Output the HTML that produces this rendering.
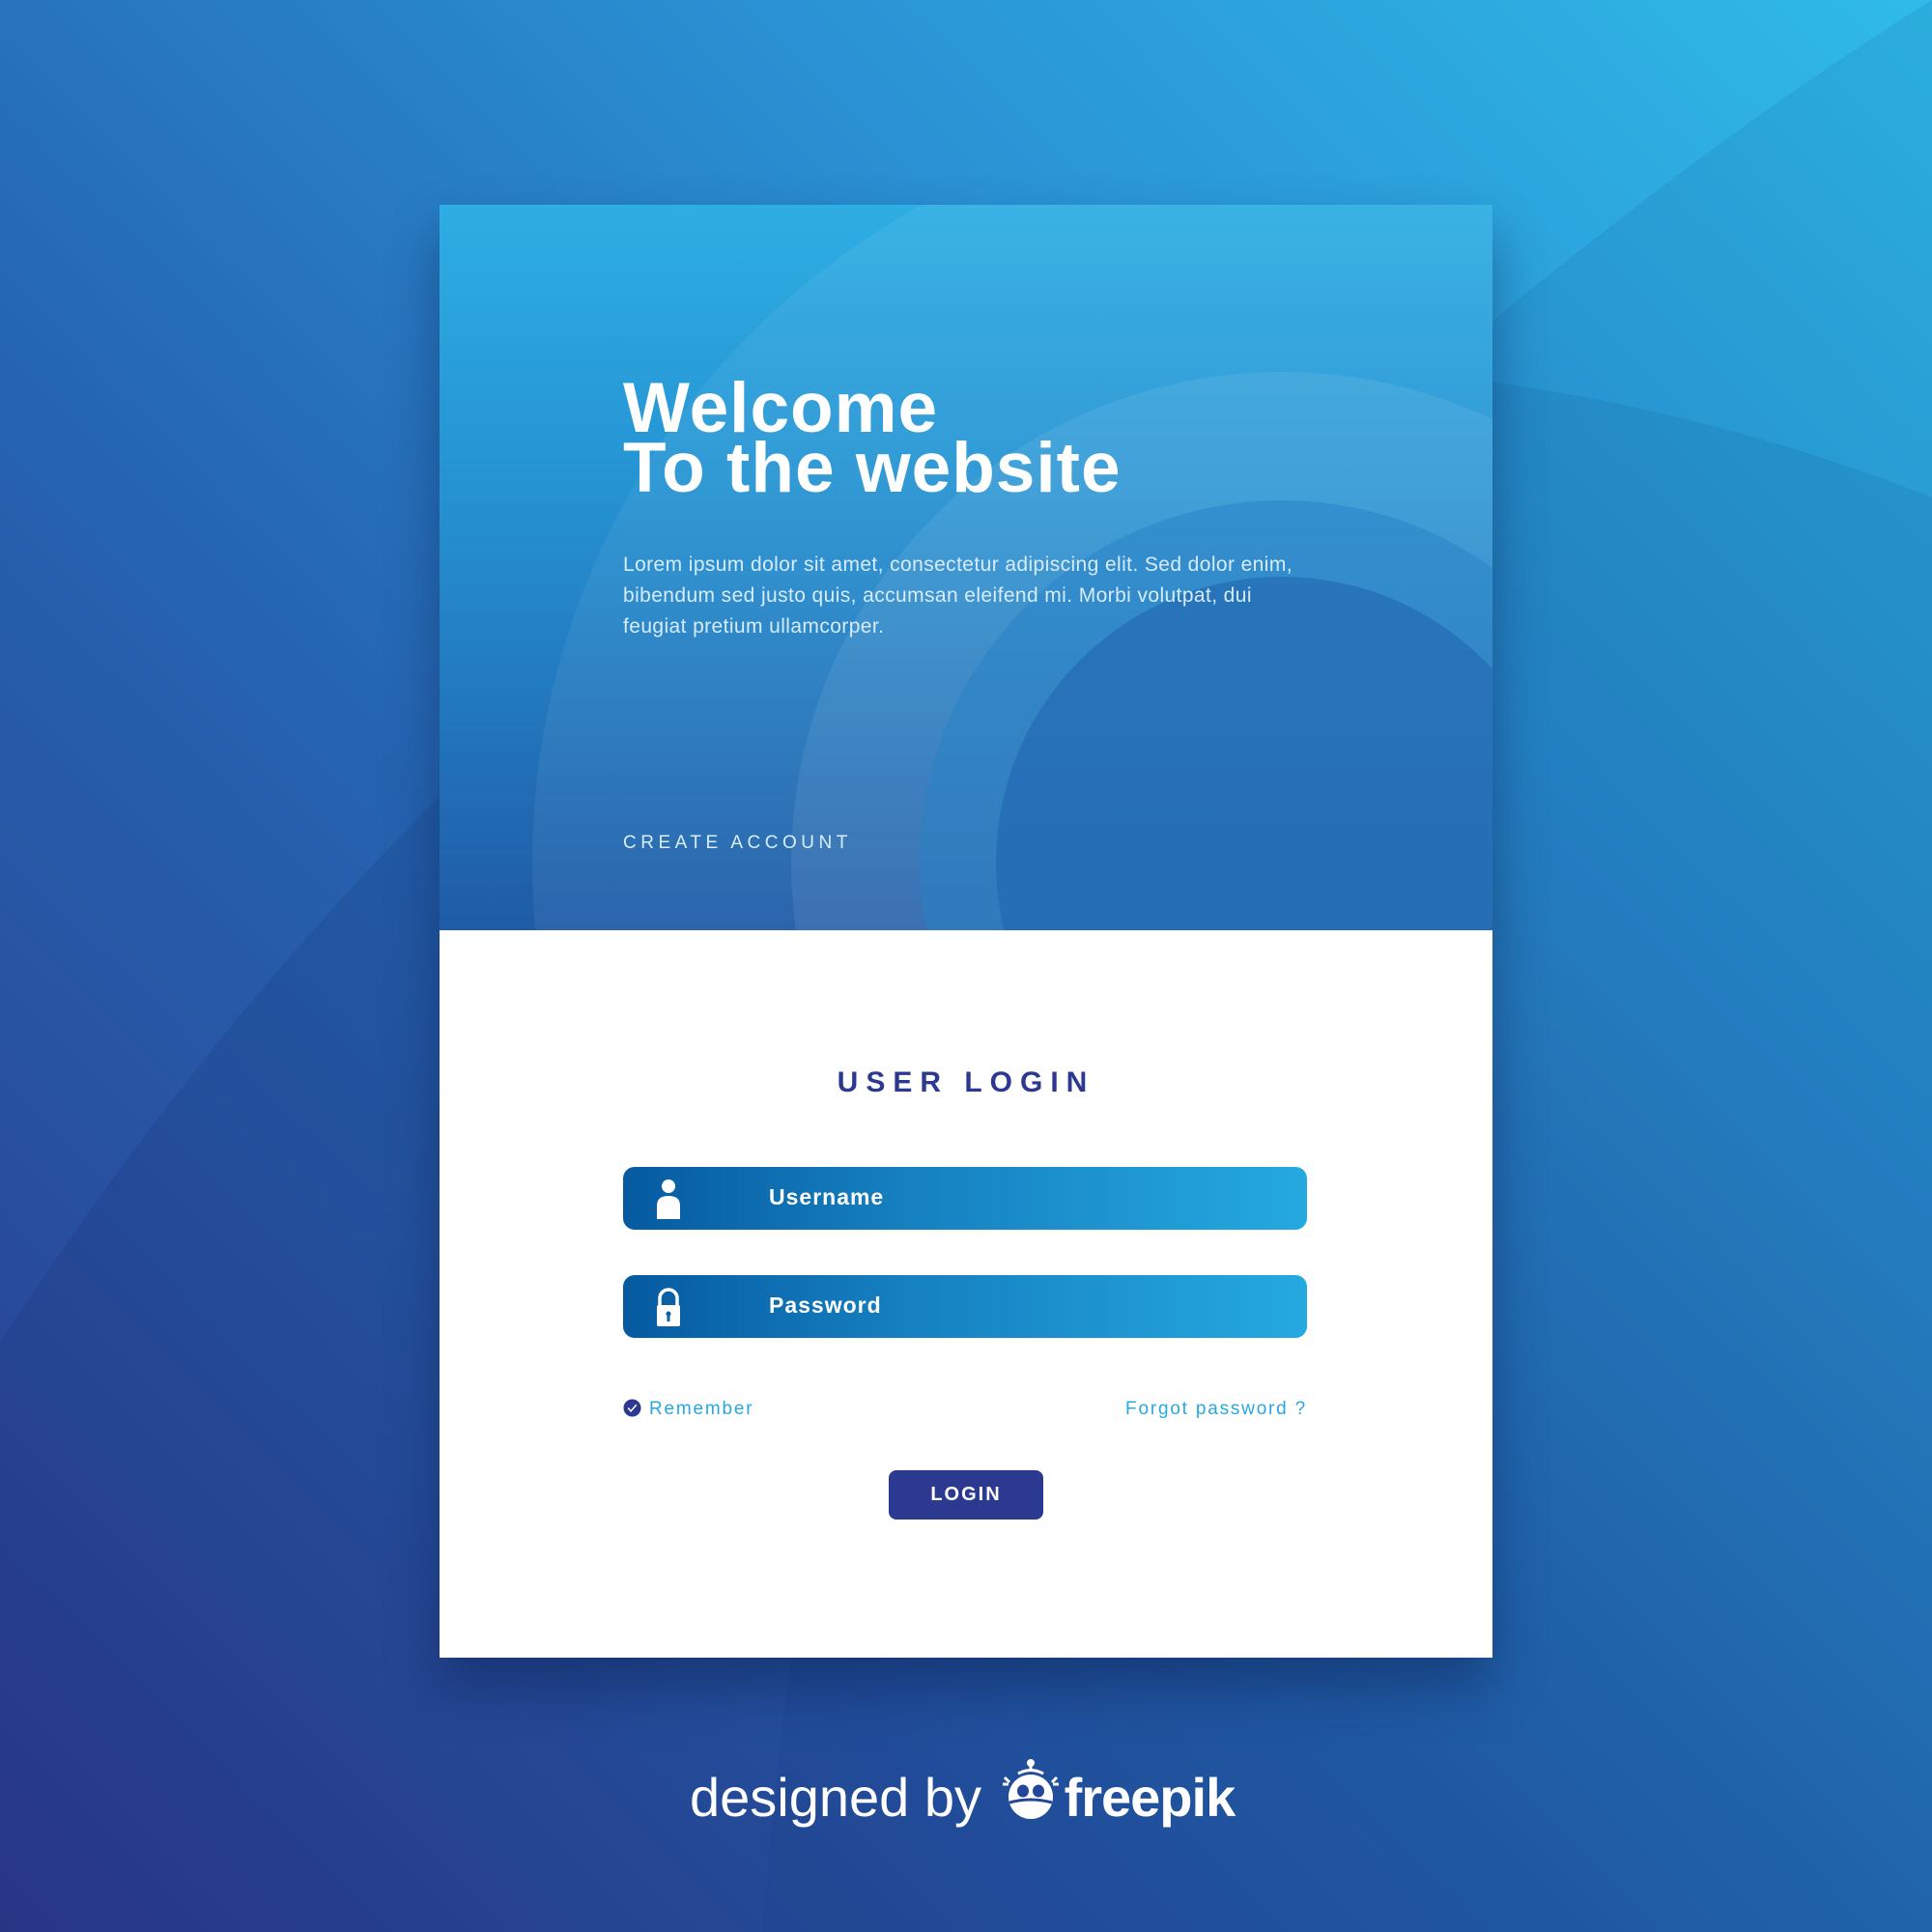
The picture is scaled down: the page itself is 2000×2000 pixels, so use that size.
<!DOCTYPE html>
<html><head><meta charset="utf-8"><style>
html,body{margin:0;padding:0;width:2000px;height:2000px;overflow:hidden;background:#2563b0}
#w{position:absolute;left:0;top:0;width:2000px;height:2000px;overflow:hidden;font-family:"Liberation Sans",sans-serif;
background:linear-gradient(225deg,#2fbbe8 0%,#2a92d4 30%,#2563b0 60%,#2c3a8e 100%);}
#bgs{position:absolute;left:0;top:0}
.card{position:absolute;left:455px;top:212px;width:1090px;height:1504px;box-shadow:0 30px 50px rgba(10,30,80,.45);background:#fff;overflow:hidden}
.top{position:absolute;left:0;top:0;width:1090px;height:751px;overflow:hidden;background:linear-gradient(180deg,#2eaee3 0%,#2592d2 40%,#1f5ba7 100%)}
.ring{position:absolute;border-radius:50%}
h1{position:absolute;left:190px;top:180px;margin:0;color:#fff;font-size:73px;line-height:62px;font-weight:bold;letter-spacing:1px;white-space:nowrap}
.lorem{position:absolute;left:190px;top:357px;color:#d6ecfa;font-size:21px;line-height:32px;letter-spacing:0.4px;white-space:nowrap}
.ca{position:absolute;left:190px;top:650px;color:#d9eefa;font-size:19px;letter-spacing:4.5px}
.ul{position:absolute;left:0;width:1090px;text-align:center;top:892px;color:#2b3990;font-size:30px;letter-spacing:8px;font-weight:bold}
.field{position:absolute;left:190px;width:708px;height:65px;border-radius:12px;background:linear-gradient(90deg,#065aa0 0%,#157fc0 40%,#25a9e1 100%);color:#fff;font-size:23px;font-weight:bold;letter-spacing:1px}
.field span{position:absolute;left:151px;top:18px}
.field svg{position:absolute;left:32px;top:12px}
.rem{position:absolute;left:190px;top:1236px;color:#27a8e0;font-size:19px;letter-spacing:1.8px}
.fg{position:absolute;right:192px;top:1236px;color:#27a8e0;font-size:19px;letter-spacing:1.8px}
.btn{position:absolute;left:465px;top:1310px;width:160px;height:51px;border-radius:8px;background:#2b3990;color:#fff;font-size:20px;font-weight:bold;letter-spacing:2px;text-align:center;line-height:51px}
.foot{position:absolute;left:714px;top:1820px;color:#fff;font-size:56px;white-space:nowrap}
</style></head><body><div id="w">
<svg id="bgs" width="2000" height="2000" viewBox="0 0 2000 2000">
 <path d="M1500,370 Q1760,150 2000,0 L2000,2000 L790,2000 Q800,1850 822,1700 L1500,1700 Z" fill="rgba(0,20,80,0.07)"/>
 <path d="M1500,390 Q1760,420 2000,515 L2000,2000 L790,2000 Q800,1850 822,1700 L1500,1700 Z" fill="rgba(0,20,80,0.08)"/>
 <path d="M0,1390 Q220,1050 500,780 L820,780 L822,1700 Q800,1850 790,2000 L0,2000 Z" fill="rgba(0,10,60,0.09)"/>
</svg>
<div class="card">
 <div class="top">
  <div class="ring" style="left:96px;top:-95px;width:1552px;height:1552px;background:rgba(255,255,255,0.06)"></div>
  <div class="ring" style="left:364px;top:173px;width:1016px;height:1016px;background:rgba(255,255,255,0.08)"></div>
  <div class="ring" style="left:497px;top:306px;width:750px;height:750px;background:#2681c6;opacity:.5"></div>
  <div class="ring" style="left:576px;top:385px;width:592px;height:592px;background:#1f66b0;opacity:.6"></div>
  <h1>Welcome<br>To the website</h1>
  <div class="lorem">Lorem ipsum dolor sit amet, consectetur adipiscing elit. Sed dolor enim,<br>bibendum sed justo quis, accumsan eleifend mi. Morbi volutpat, dui<br>feugiat pretium ullamcorper.</div>
  <div class="ca">CREATE ACCOUNT</div>
 </div>
 <div class="ul">USER LOGIN</div>
 <div class="field" style="top:996px"><svg width="30" height="42" viewBox="0 0 30 42"><circle cx="15" cy="8" r="7" fill="#fff"/><path d="M3 42V28Q3 18 15 18Q27 18 27 28V42Z" fill="#fff"/></svg><span>Username</span></div>
 <div class="field" style="top:1108px"><svg width="30" height="42" viewBox="0 0 30 42"><path d="M6 20V12A9 9 0 0 1 24 12V20" stroke="#fff" stroke-width="3.5" fill="none"/><rect x="3" y="19" width="24" height="22" rx="2" fill="#fff"/><rect x="13.5" y="27" width="3" height="9" fill="#0b62a6"/><circle cx="15" cy="28" r="2.5" fill="#0b62a6"/></svg><span>Password</span></div>
 <div class="rem"><svg width="19" height="19" viewBox="0 0 20 20" style="vertical-align:-3px;margin-right:8px"><circle cx="10" cy="10" r="9.5" fill="#2b3990"/><path d="M5.5 10l3 3.5 6-7" stroke="#fff" stroke-width="1.6" fill="none"/></svg>Remember</div>
 <div class="fg">Forgot password ?</div>
 <div class="btn">LOGIN</div>
</div>
<div class="foot">designed by <svg width="62" height="66" viewBox="0 0 62 66" style="vertical-align:-6px;margin:0 4px"><circle cx="31" cy="5" r="4" fill="#fff"/><rect x="29.5" y="5" width="3" height="9" fill="#fff"/><path d="M18 16Q31 9 44 16" stroke="#fff" stroke-width="3" fill="none"/><circle cx="31" cy="40" r="23" fill="#fff"/><ellipse cx="23" cy="34" rx="6" ry="6.5" fill="#24469a"/><ellipse cx="39" cy="34" rx="6" ry="6.5" fill="#24469a"/><path d="M9 46Q31 40 53 46" stroke="#24469a" stroke-width="3" fill="none"/><path d="M4 20l5 5M2 27l6 0M58 20l-5 5M60 27l-6 0" stroke="#fff" stroke-width="3"/></svg><b style="letter-spacing:-1px">freepik</b></div>
</div></body></html>
